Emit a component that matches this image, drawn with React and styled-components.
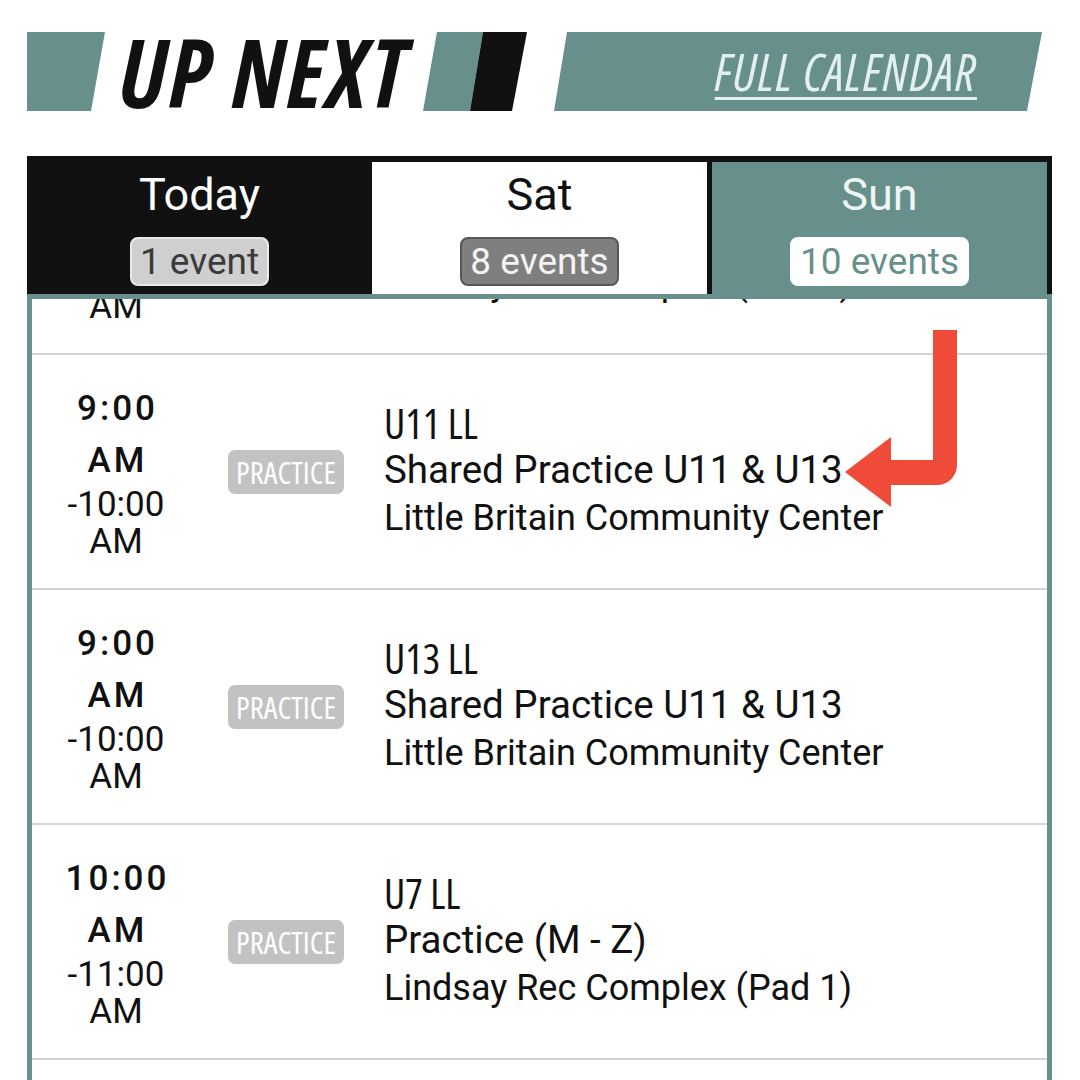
import React from "react";
import styled, { createGlobalStyle } from "styled-components";

const TEAL = "#678f8b";
const CONDENSED = `"Open Sans", "Liberation Sans", sans-serif`;

const Global = createGlobalStyle`
  body {
    margin: 0;
    background: #fff;
    font-family: Roboto, "Liberation Sans", sans-serif;
    color: #111;
  }
`;

const Page = styled.div`
  position: relative;
  width: 1080px;
  height: 1080px;
  overflow: hidden;
  display: flex;
  flex-direction: column;
  background: #fff;
`;

/* ---------- header ---------- */

const Header = styled.header`
  display: flex;
  height: 79px;
  margin-top: 32px;
  padding-left: 27px;
  flex-shrink: 0;
`;

const LeftBlock = styled.div`
  width: 78px;
  background: ${TEAL};
  clip-path: polygon(0 0, 100% 0, calc(100% - 14px) 100%, 0 100%);
`;

const Title = styled.h1`
  margin: 0;
  width: 318px;
  padding-left: 14px;
  box-sizing: border-box;
  font-family: ${CONDENSED};
  font-stretch: 75%;
  font-weight: 700;
  font-style: italic;
  font-size: 95px;
  line-height: 79px;
  letter-spacing: 2px;
  color: #111;
  white-space: nowrap;
`;

const Banner = styled.a`
  margin-left: 27px;
  width: 488px;
  background: ${TEAL};
  clip-path: polygon(13px 0, 100% 0, calc(100% - 15px) 100%, 0 100%);
  display: flex;
  justify-content: flex-end;
  padding-right: 65px;
  box-sizing: border-box;
  font-family: ${CONDENSED};
  font-stretch: 75%;
  font-style: italic;
  font-weight: 400;
  font-size: 51px;
  line-height: 79px;
  letter-spacing: 1px;
  color: #e3f0ef;
  text-decoration: underline;
  text-decoration-thickness: 3px;
  text-underline-offset: 6px;
  white-space: nowrap;
`;

function Stripe() {
  return (
    <svg width="104" height="79" viewBox="0 0 104 79">
      <polygon points="14,0 60,0 47,79 0,79" fill={TEAL} />
      <polygon points="60,0 104,0 89,79 47,79" fill="#111" />
    </svg>
  );
}

/* ---------- tabs ---------- */

const Tabs = styled.nav`
  margin: 45px 28px 0 27px;
  background: #111;
  padding: 6px 5px 0 0;
  display: grid;
  grid-template-columns: 345px 335px 340px;
  flex-shrink: 0;
`;

const tabBg = { dark: "#111", light: "#fff", teal: TEAL };
const tabFg = { dark: "#fff", light: "#111", teal: "#eef6f5" };

const Tab = styled.div`
  height: 132px;
  margin-left: ${(p) => (p.$tone === "teal" ? "5px" : "0")};
  background: ${(p) => tabBg[p.$tone]};
  display: flex;
  flex-direction: column;
  align-items: center;
  padding-top: 10px;
  box-sizing: border-box;
`;

const TabLabel = styled.div`
  font-size: 45px;
  line-height: 45px;
  color: ${(p) => tabFg[p.$tone]};
`;

const badgeStyles = {
  dark: "background:#cfcfcf;border-color:#e9e9e9;color:#3a3a3a;",
  light: "background:#7f7f7f;border-color:#575757;color:#f3f3f3;",
  teal: `background:#fff;border-color:#fff;color:${TEAL};`,
};

const CountBadge = styled.div`
  margin-top: 20px;
  height: 49px;
  box-sizing: border-box;
  padding: 0 8px;
  border: 2px solid;
  border-radius: 8px;
  font-size: 37px;
  line-height: 45px;
  ${(p) => badgeStyles[p.$tone]}
`;

/* ---------- list ---------- */

const Panel = styled.section`
  flex: 1;
  margin: 0 28px 0 27px;
  border: 5px solid ${TEAL};
  border-bottom: none;
  overflow: hidden;
  background: #fff;
`;

const List = styled.div`
  margin-top: -179px;
`;

const Row = styled.div`
  height: 233px;
  border-bottom: 2px solid #d4d4d4;
  display: flex;
  align-items: center;
`;

const TimeCol = styled.div`
  width: 168px;
  flex-shrink: 0;
  text-align: center;
  font-size: 35px;
  color: #111;
`;

const TimeStrong = styled.div`
  font-weight: 500;
  letter-spacing: 3px;
  padding-left: 3px;
  line-height: 52px;
`;

const TimeEnd = styled.div`
  line-height: ${(p) => p.$lh}px;
`;

const TypeBadge = styled.div`
  margin-left: 28px;
  width: 116px;
  height: 44px;
  flex-shrink: 0;
  border-radius: 7px;
  background: #c2c2c2;
  color: #fff;
  font-family: ${CONDENSED};
  font-stretch: 75%;
  font-weight: 500;
  font-size: 31px;
  line-height: 44px;
  text-align: center;
`;

const Info = styled.div`
  margin-left: 40px;
  white-space: nowrap;
`;

const Team = styled.div`
  font-family: ${CONDENSED};
  font-stretch: 75%;
  font-weight: 500;
  font-size: 41px;
  line-height: 44px;
`;

const Desc = styled.div`
  font-size: 38.5px;
  line-height: 50px;
`;

const Place = styled.div`
  font-size: 36px;
  line-height: 47px;
`;

const Arrow = styled.svg`
  position: absolute;
  left: 840px;
  top: 325px;
`;

const events = [
  { start: "8:00", end: "-9:00", team: "U9 LL", desc: "Practice (A - L)", place: "Lindsay Rec Complex (Pad 2)" },
  { start: "9:00", end: "-10:00", team: "U11 LL", desc: "Shared Practice U11 & U13", place: "Little Britain Community Center" },
  { start: "9:00", end: "-10:00", team: "U13 LL", desc: "Shared Practice U11 & U13", place: "Little Britain Community Center" },
  { start: "10:00", end: "-11:00", team: "U7 LL", desc: "Practice (M - Z)", place: "Lindsay Rec Complex (Pad 1)" },
  { start: "11:00", end: "-12:00", team: "U15 LL", desc: "Practice", place: "Lindsay Rec Complex (Pad 1)" },
];

const tabs = [
  { tone: "dark", label: "Today", count: "1 event" },
  { tone: "light", label: "Sat", count: "8 events" },
  { tone: "teal", label: "Sun", count: "10 events" },
];

export default function App() {
  return (
    <Page>
      <Global />
      <Header>
        <LeftBlock />
        <Title>UP NEXT</Title>
        <Stripe />
        <Banner>FULL CALENDAR</Banner>
      </Header>

      <Tabs>
        {tabs.map((t) => (
          <Tab key={t.label} $tone={t.tone}>
            <TabLabel $tone={t.tone}>{t.label}</TabLabel>
            <CountBadge $tone={t.tone}>{t.count}</CountBadge>
          </Tab>
        ))}
      </Tabs>

      <Panel>
        <List>
          {events.map((e, i) => (
            <Row key={i}>
              <TimeCol>
                <TimeStrong>{e.start}</TimeStrong>
                <TimeStrong>AM</TimeStrong>
                <TimeEnd $lh={36}>{e.end}</TimeEnd>
                <TimeEnd $lh={38}>AM</TimeEnd>
              </TimeCol>
              <TypeBadge>PRACTICE</TypeBadge>
              <Info>
                <Team>{e.team}</Team>
                <Desc>{e.desc}</Desc>
                <Place>{e.place}</Place>
              </Info>
            </Row>
          ))}
        </List>
      </Panel>

      <Arrow width="125" height="190" viewBox="0 0 125 190">
        <path
          d="M93 5 H117 V140 A20 20 0 0 1 97 160 H51 V182 L5 147 L51 112 V135 H93 Z"
          fill="#f04b39"
        />
      </Arrow>
    </Page>
  );
}
